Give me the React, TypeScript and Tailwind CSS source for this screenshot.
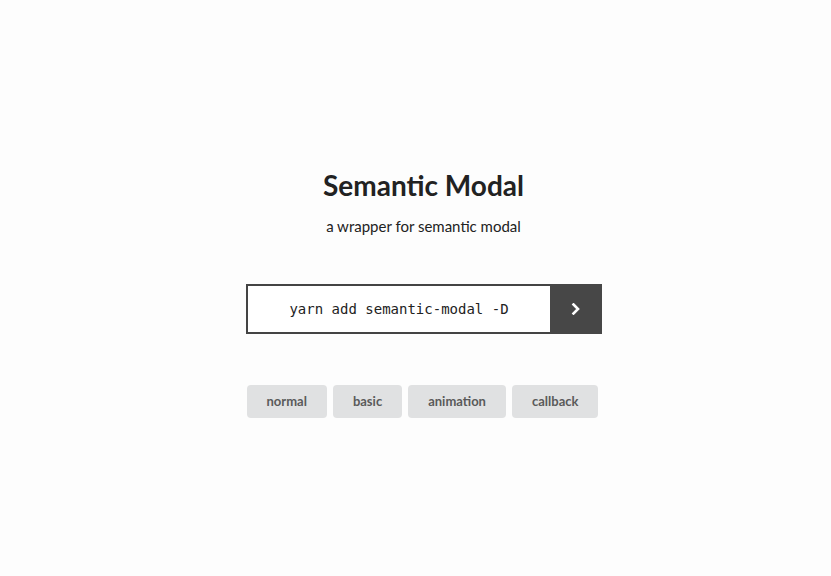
import React from "react";

export default function App() {
  const buttons = ["normal", "basic", "animation", "callback"];
  return (
    <div className="min-h-[576px] w-full bg-[#fdfdfd] pl-[16px] flex flex-col items-center" style={{ fontFamily: "Lato, 'Noto Sans', sans-serif" }}>
      <h1 className="mt-[167px] text-[28px] leading-[36px] font-bold text-[#222]" style={{ fontFamily: "Lato, sans-serif" }}>
        Semantic Modal
      </h1>
      <p className="mt-[13px] text-[15px] leading-[20px] text-[#222]">a wrapper for semantic modal</p>
      <div className="mt-[48px] ml-[1px] flex h-[50px] w-[356px]">
        <div className="flex-1 border-2 border-r-0 border-[#444] bg-white flex items-center justify-center">
          <span className="text-[14px] text-[#222]" style={{ fontFamily: "'DejaVu Sans Mono', monospace" }}>
            yarn add semantic-modal -D
          </span>
        </div>
        <div className="w-[52px] h-full bg-[#474747] flex items-center justify-center">
          <svg width="10" height="12" viewBox="0 0 10 12">
            <path d="M2.5 1.5 L7 6 L2.5 10.5" fill="none" stroke="#fff" strokeWidth="2.6" strokeLinecap="square" />
          </svg>
        </div>
      </div>
      <div className="mt-[51px] -ml-[2px] flex gap-[6px]">
        {buttons.map((b) => (
          <button
            key={b}
            className="h-[33px] px-[20px] rounded-[4px] bg-[#e0e1e2] text-[13px] font-bold text-[#5a5a5a]"
            style={{ fontFamily: "Lato, sans-serif" }}
          >
            {b}
          </button>
        ))}
      </div>
    </div>
  );
}
